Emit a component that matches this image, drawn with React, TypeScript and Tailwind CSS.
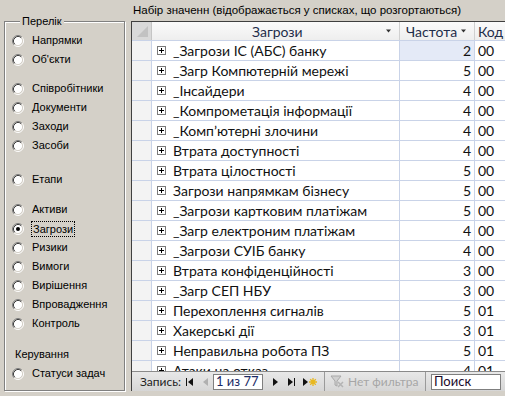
import React from "react";

const rows: [string, number, string][] = [
  ["_Загрози ІС (АБС) банку", 2, "00"],
  ["_Загр Компютерній мережі", 5, "00"],
  ["_Інсайдери", 4, "00"],
  ["_Компрометація інформації", 4, "00"],
  ["_Комп’ютерні злочини", 4, "00"],
  ["Втрата доступності", 4, "00"],
  ["Втрата цілостності", 5, "00"],
  ["Загрози напрямкам бізнесу", 5, "00"],
  ["_Загрози картковим платіжам", 5, "00"],
  ["_Загр електроним платіжам", 4, "00"],
  ["_Загрози СУІБ банку", 4, "00"],
  ["Втрата конфіденційності", 3, "00"],
  ["_Загр СЕП НБУ", 3, "00"],
  ["Перехоплення сигналів", 5, "01"],
  ["Хакерські дії", 3, "01"],
  ["Неправильна робота ПЗ", 5, "01"],
  ["Атаки на отказ", 4, "01"],
];

const groups: { items: string[]; gap: string }[] = [
  { items: ["Напрямки", "Об'єкти"], gap: "mt-[3px]" },
  { items: ["Співробітники", "Документи", "Заходи", "Засоби"], gap: "mt-[10px]" },
  { items: ["Етапи"], gap: "mt-[15px]" },
  { items: ["Активи", "Загрози", "Ризики", "Вимоги", "Вирішення", "Впровадження", "Контроль"], gap: "mt-[11px]" },
];

function Radio({ checked }: { checked?: boolean }) {
  return (
    <svg width="12" height="12" viewBox="0 0 12 12" className="shrink-0">
      <circle cx="6" cy="6" r="4.5" fill="#fff" />
      <path d="M2.11 9.89A5.5 5.5 0 0 1 9.89 2.11" stroke="#808080" fill="none" />
      <path d="M9.89 2.11A5.5 5.5 0 0 1 2.11 9.89" stroke="#ffffff" fill="none" />
      <path d="M2.82 9.18A4.5 4.5 0 0 1 9.18 2.82" stroke="#404040" fill="none" />
      <path d="M9.18 2.82A4.5 4.5 0 0 1 2.82 9.18" stroke="#d4d0c8" fill="none" />
      {checked && <circle cx="6" cy="6" r="2" fill="#000" />}
    </svg>
  );
}

function Option({ label }: { label: string }) {
  const selected = label === "Загрози";
  return (
    <div className="flex h-[19px] items-center">
      <Radio checked={selected} />
      {selected ? (
        <span className="ml-[7px] border border-dotted border-black px-[1px] leading-[14px]">{label}</span>
      ) : (
        <span className="ml-[8px]">{label}</span>
      )}
    </div>
  );
}

function PlusBox() {
  return (
    <svg width="9" height="9" viewBox="0 0 9 9" className="shrink-0">
      <rect x="0.5" y="0.5" width="8" height="8" fill="#fff" stroke="#7a7a7a" />
      <path d="M2 4.5h5M4.5 2v5" stroke="#000" />
    </svg>
  );
}

function Arrow() {
  return (
    <svg width="7" height="4" viewBox="0 0 7 4" className="shrink-0">
      <path d="M1 0.5h5L3.5 3.5z" fill="#333" />
    </svg>
  );
}

export default function App() {
  return (
    <div className="flex h-[396px] w-[505px] overflow-hidden bg-[#d4d0c8] font-['Liberation_Sans',Arial,sans-serif] text-[11px] text-black">
      {/* left: option group */}
      <div className="w-[131px] shrink-0">
        <fieldset className="ml-[4px] mt-[15px] h-[376px] w-[121px] border border-[#808080] pl-[7px] shadow-[inset_1px_1px_0_#fff,1px_1px_0_#fff]">
          <legend className="ml-[8px] bg-[#d4d0c8] px-[2px] leading-[13px]">Перелік</legend>
          {groups.map((g, i) => (
            <div key={i} className={g.gap}>
              {g.items.map((it) => (
                <Option key={it} label={it} />
              ))}
            </div>
          ))}
          <div className="mt-[12px] ml-[3px] flex h-[19px] items-center">Керування</div>
          <Option label="Статуси задач" />
        </fieldset>
      </div>

      {/* right: datasheet */}
      <div className="flex w-[374px] shrink-0 flex-col">
        <div className="flex h-[21px] items-center pl-[2px] text-[11.5px] whitespace-nowrap">
          Набір значенн (відображається у списках, що розгортаються)
        </div>
        <div className="flex h-[370px] flex-col border-l border-t border-[#404040] font-['Lato',sans-serif] text-[14px]">
          <div className="flex h-[19px] shrink-0 border-b border-[#c9d3e8] bg-gradient-to-b from-[#fbfbfb] to-[#eeeeee] text-[#1f2d4a] whitespace-nowrap">
            <div className="flex w-[20px] shrink-0 items-end justify-end border-r border-[#c5c5c5] bg-[#d9d9d9] pb-[3px] pr-[3px]">
              <svg width="11" height="11" viewBox="0 0 11 11">
                <path d="M11 0V11H0z" fill="#c2c2c2" />
              </svg>
            </div>
            <div className="flex w-[248px] shrink-0 items-center border-r border-[#d0d0d0] pl-[100px] pr-[7px]">
              <span className="flex-1">Загрози</span>
              <Arrow />
            </div>
            <div className="flex w-[75px] shrink-0 items-center border-r border-[#d0d0d0] pl-[6px] pr-[7px]">
              <span className="flex-1">Частота</span>
              <Arrow />
            </div>
            <div className="flex flex-1 items-center pl-[3px]">
              <span>Код</span>
              <span className="ml-[6px]"><Arrow /></span>
            </div>
          </div>

          <div className="flex-1 overflow-hidden bg-white text-[#111]">
            {rows.map(([name, freq, code], i) => (
              <div key={i} className="flex h-[20px] border-b border-[#c9d3e8]">
                <div className="w-[20px] shrink-0 border-r border-[#c9d3e8] bg-[#f3f3f3]" />
                <div className="flex w-[248px] shrink-0 items-center border-r border-[#c9d3e8] pl-[5px] whitespace-nowrap">
                  <PlusBox />
                  <span className="ml-[7px]">{name}</span>
                </div>
                <div
                  className={
                    i === 0
                      ? "flex w-[75px] shrink-0 items-center justify-end border-r border-[#c9d3e8] bg-[#e4eaf7] pr-[3px]"
                      : "flex w-[75px] shrink-0 items-center justify-end border-r border-[#c9d3e8] pr-[3px]"
                  }
                >
                  {freq}
                </div>
                <div className="flex flex-1 items-center pl-[3px]">{code}</div>
              </div>
            ))}
          </div>

          <div className="flex h-[20px] shrink-0 items-center overflow-hidden border-t border-[#8a8a8a] bg-gradient-to-b from-[#e8e8e8] to-[#d6d6d6] text-[12px] leading-none text-[#222] whitespace-nowrap">
            <span className="ml-[8px] w-[46px] shrink-0">Запись:</span>
            <svg width="7" height="8" viewBox="0 0 7 8" className="shrink-0">
              <path d="M0.5 0v8" stroke="#111" />
              <path d="M7 0v8L2 4z" fill="#111" />
            </svg>
            <svg width="5" height="8" viewBox="0 0 5 8" className="ml-[10px] shrink-0">
              <path d="M5 0v8L0 4z" fill="#b0b0b0" />
            </svg>
            <div className="ml-[5px] flex h-[16px] w-[50px] shrink-0 items-center border border-[#7f7f7f] bg-white pl-[2px] text-[13px] text-[#1a2a66]">
              1 из 77
            </div>
            <svg width="5" height="8" viewBox="0 0 5 8" className="ml-[10px] shrink-0">
              <path d="M0 0v8L5 4z" fill="#111" />
            </svg>
            <svg width="7" height="8" viewBox="0 0 7 8" className="ml-[10px] shrink-0">
              <path d="M0 0v8L5 4z" fill="#111" />
              <path d="M6.5 0v8" stroke="#111" />
            </svg>
            <svg width="14" height="10" viewBox="0 0 14 10" className="ml-[8px] shrink-0">
              <path d="M0 1v8L5 5z" fill="#111" />
              <path d="M10 1v8M6 5h8M7.2 2.2l5.6 5.6M12.8 2.2l-5.6 5.6" stroke="#e8b820" strokeWidth="1.3" />
            </svg>
            <div className="ml-[7px] h-full w-px shrink-0 bg-[#9a9a9a]" />
            <svg width="14" height="13" viewBox="0 0 14 13" className="ml-[5px] shrink-0">
              <path d="M1 1h10L7 6v5L5 10V6z" fill="#d0d0d0" stroke="#a8a8a8" />
              <path d="M8 7l5 5M13 7l-5 5" stroke="#b4b4b4" strokeWidth="1.5" />
            </svg>
            <span className="ml-[4px] w-[77px] shrink-0 text-[#a6a6a6]">Нет фильтра</span>
            <div className="h-full w-px shrink-0 bg-[#9a9a9a]" />
            <div className="ml-[5px] flex h-[16px] w-[70px] shrink-0 items-center border border-[#7f7f7f] bg-white pl-[2px] text-[13px] text-[#1a0a2a]">
              Поиск
            </div>
          </div>
        </div>
      </div>
    </div>
  );
}
